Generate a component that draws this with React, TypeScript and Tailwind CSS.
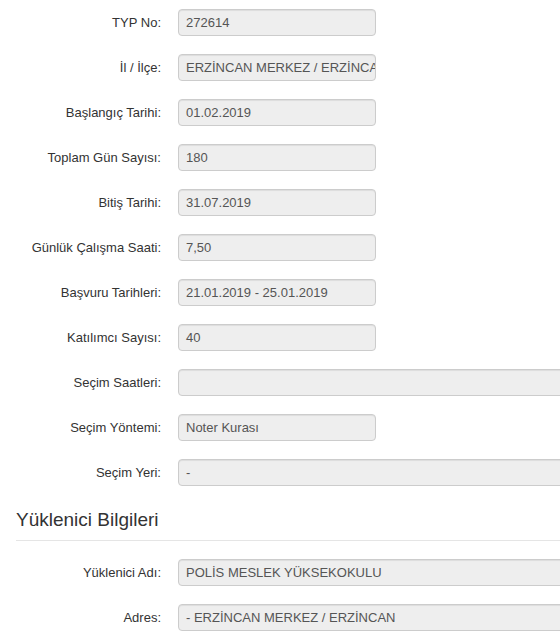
const rows: { label: string; value: string; wide?: boolean }[] = [
  { label: "TYP No:", value: "272614" },
  { label: "İl / İlçe:", value: "ERZİNCAN MERKEZ / ERZİNCAN" },
  { label: "Başlangıç Tarihi:", value: "01.02.2019" },
  { label: "Toplam Gün Sayısı:", value: "180" },
  { label: "Bitiş Tarihi:", value: "31.07.2019" },
  { label: "Günlük Çalışma Saati:", value: "7,50" },
  { label: "Başvuru Tarihleri:", value: "21.01.2019 - 25.01.2019" },
  { label: "Katılımcı Sayısı:", value: "40" },
  { label: "Seçim Saatleri:", value: "", wide: true },
  { label: "Seçim Yöntemi:", value: "Noter Kurası" },
  { label: "Seçim Yeri:", value: "-", wide: true },
];

const contractor = [
  { label: "Yüklenici Adı:", value: "POLİS MESLEK YÜKSEKOKULU" },
  { label: "Adres:", value: "- ERZİNCAN MERKEZ / ERZİNCAN" },
];

function Field({ label, value, wide }: { label: string; value: string; wide?: boolean }) {
  return (
    <div className="flex items-center h-[27px] mb-[18px]">
      <div className="w-[161px] shrink-0 text-right text-[13px] text-[#333]">{label}</div>
      <div
        className={
          "ml-[17px] shrink-0 h-[27px] flex items-center px-[7px] rounded-[4px] border border-[#ccc] bg-[#eee] text-[13px] text-[#555] overflow-hidden whitespace-nowrap shadow-[inset_0_1px_1px_rgba(0,0,0,0.075)] " +
          (wide ? "w-[500px]" : "w-[198px]")
        }
      >
        {value}
      </div>
    </div>
  );
}

export default function App() {
  return (
    <div
      className="w-[560px] h-[638px] overflow-hidden bg-white pt-[9px]"
      style={{ fontFamily: '"Liberation Sans", Arial, sans-serif' }}
    >
      {rows.map((r) => (
        <Field key={r.label} {...r} />
      ))}
      <div className="ml-[16px] mt-[23px] mb-[18px] pb-[10px] border-b border-[#e5e5e5] w-[600px]">
        <h3 className="text-[19px] leading-[21px] text-[#333]">Yüklenici Bilgileri</h3>
      </div>
      {contractor.map((r) => (
        <Field key={r.label} {...r} wide />
      ))}
    </div>
  );
}
